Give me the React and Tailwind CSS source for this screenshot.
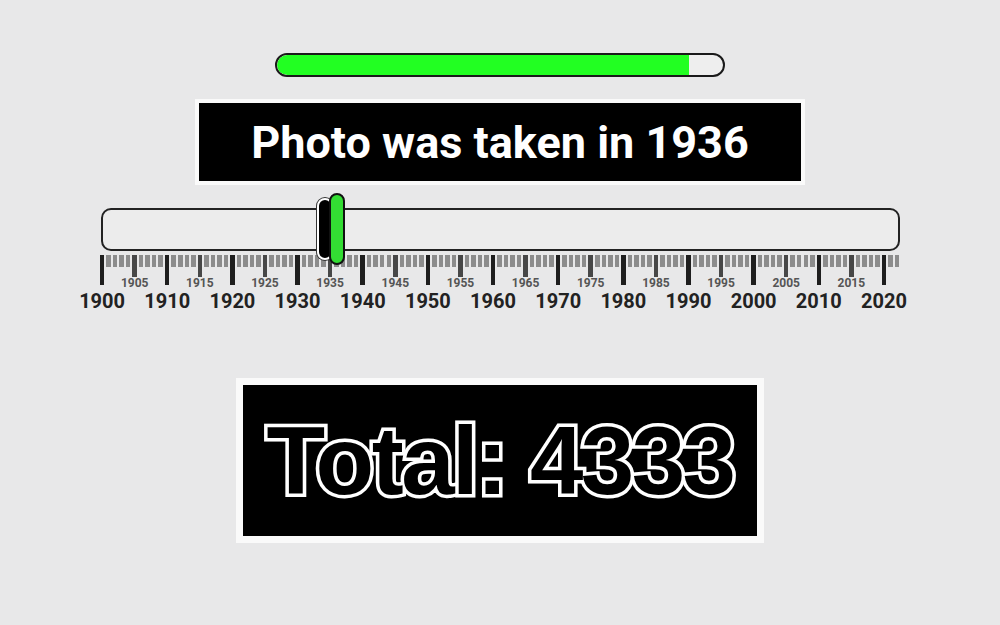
import React from "react";

const years = Array.from({ length: 123 }, (_, i) => 1900 + i);

function YearCell({ y }) {
  const decade = y % 10 === 0;
  const five = !decade && y % 5 === 0;
  return (
    <div className="flex flex-col items-center w-[6.518px] shrink-0">
      {decade ? (
        <>
          <div className="w-[4.5px] h-[30px] bg-[#1e1e1e] shrink-0" />
          <div className="mt-[6px] text-[20px] leading-[20px] font-bold text-[#222] whitespace-nowrap">{y}</div>
        </>
      ) : five ? (
        <>
          <div className="w-[4.5px] h-[22px] bg-[#474747] shrink-0" />
          <div className="text-[12px] leading-[12px] font-bold text-[#555] whitespace-nowrap">{y}</div>
        </>
      ) : (
        <div className="w-[4.5px] h-[12px] bg-[#8c8c8c] shrink-0" />
      )}
    </div>
  );
}

export default function App() {
  return (
    <div
      className="w-[1000px] h-[625px] bg-[#e8e8e9] flex flex-col items-center overflow-hidden"
      style={{ fontFamily: "Roboto, 'Noto Sans', sans-serif" }}
    >
      {/* progress bar */}
      <div className="mt-[53px] w-[450px] h-[24px] rounded-full border-2 border-[#1a1a1a] bg-[#eeeeee] overflow-hidden flex">
        <div className="w-[412px] h-full bg-[#22ff22] rounded-l-full" />
      </div>

      {/* title */}
      <div className="mt-[22px] w-[610px] h-[86px] border-4 border-[#fafafa] bg-black flex items-center justify-center">
        <span className="text-white font-bold text-[45px] leading-none">Photo was taken in 1936</span>
      </div>

      {/* slider */}
      <div className="mt-[23px] w-[799px] relative">
        <div className="h-[43px] rounded-[10px] border-2 border-[#222] bg-[#ececec]" />
        <div className="mt-[4px] flex items-start ml-[-1.7px]">
          {years.map((y) => (
            <YearCell key={y} y={y} />
          ))}
        </div>
        {/* previous marker */}
        <div className="absolute left-[216px] top-[-10px] w-[16px] h-[62px] rounded-full bg-black border-2 border-white ring-1 ring-[#333]" />
        {/* current thumb */}
        <div className="absolute left-[228px] top-[-15px] w-[16px] h-[72px] rounded-full bg-[#33dd33] border-2 border-[#111]" />
      </div>

      {/* total */}
      <div className="mt-[67px] w-[528px] h-[165px] border-[7px] border-[#fafafa] bg-black flex items-center justify-center">
        <span
          className="text-black font-bold text-[96px] leading-none tracking-[-2.5px] [-webkit-text-stroke:7px_white] [paint-order:stroke_fill]"
          style={{ fontFamily: "'Liberation Sans', Arial, sans-serif" }}
        >
          Total: 4333
        </span>
      </div>
    </div>
  );
}
